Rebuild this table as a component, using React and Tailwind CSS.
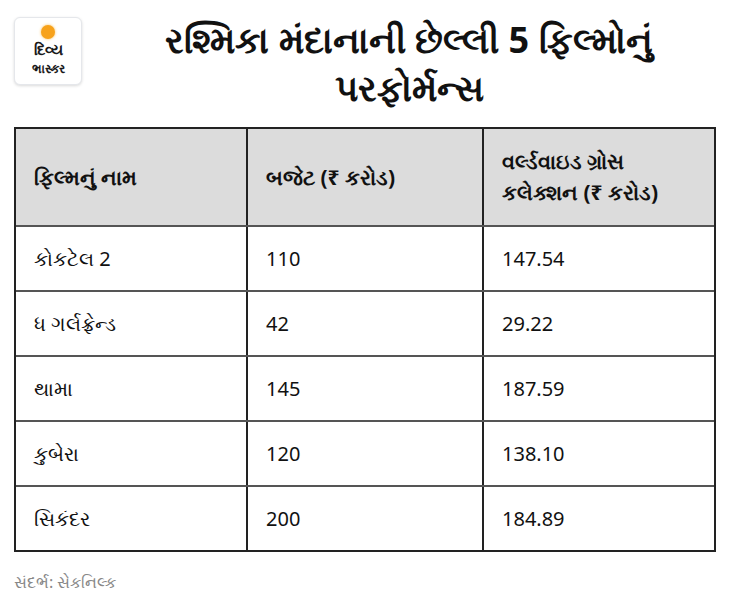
import React from 'react';

const rows = [
  ['કોકટેલ 2', '110', '147.54'],
  ['ધ ગર્લફ્રેન્ડ', '42', '29.22'],
  ['થામા', '145', '187.59'],
  ['કુબેરા', '120', '138.10'],
  ['સિકંદર', '200', '184.89'],
];

const Logo = () => (
  <div className="w-[68px] h-[68px] shrink-0 rounded-[6px] bg-white border border-gray-200 shadow-[0_1px_3px_rgba(0,0,0,0.15)] flex flex-col items-center pt-[7px]">
    <div className="w-[14px] h-[14px] rounded-full bg-[#f7a21b] shadow-[0_0_3px_#fbc15a]" />
    <div className="text-[15px] leading-[19px] font-bold text-[#1a1a1a] mt-[1px]">દિવ્ય</div>
    <div className="text-[12px] leading-[17px] font-bold text-[#1a1a1a] mt-[1px]">ભાસ્કર</div>
  </div>
);

const App = () => {
  return (
    <div className="w-[730px] h-[613px] bg-white font-['Noto_Sans',sans-serif] text-[#111]">
      <div className="flex px-[14px] pt-[17px]">
        <Logo />
        <h1 className="flex-1 text-center text-[36px] leading-[48px] font-bold mt-[-1px] pl-[20px]">
          રશ્મિકા મંદાનાની છેલ્લી 5 ફિલ્મોનું<br />પરફોર્મન્સ
        </h1>
      </div>
      <div className="mx-[14px] mt-[15px] border-2 border-[#222]">
        <div className="grid grid-cols-[230px_236px_1fr] bg-[#dcdcdc] h-[96px] text-[21px] font-bold leading-[31px]">
          <div className="flex items-center px-[18px]">ફિલ્મનું નામ</div>
          <div className="flex items-center px-[18px] border-l-2 border-[#222]">બજેટ (₹ કરોડ)</div>
          <div className="flex items-center px-[18px] border-l-2 border-[#222]">વર્લ્ડવાઇડ ગ્રોસ<br />કલેક્શન (₹ કરોડ)</div>
        </div>
        {rows.map((r, i) => (
          <div key={i} className="grid grid-cols-[230px_236px_1fr] h-[65px] text-[20px] border-t-2 border-[#555]">
            <div className="flex items-center px-[18px]">{r[0]}</div>
            <div className="flex items-center px-[18px] border-l-2 border-[#222]">{r[1]}</div>
            <div className="flex items-center px-[18px] border-l-2 border-[#222]">{r[2]}</div>
          </div>
        ))}
      </div>
      <div className="px-[14px] mt-[18px] text-[16px] text-[#888]">સંદર્ભ: સેકનિલ્ક</div>
    </div>
  );
};

export default App;
